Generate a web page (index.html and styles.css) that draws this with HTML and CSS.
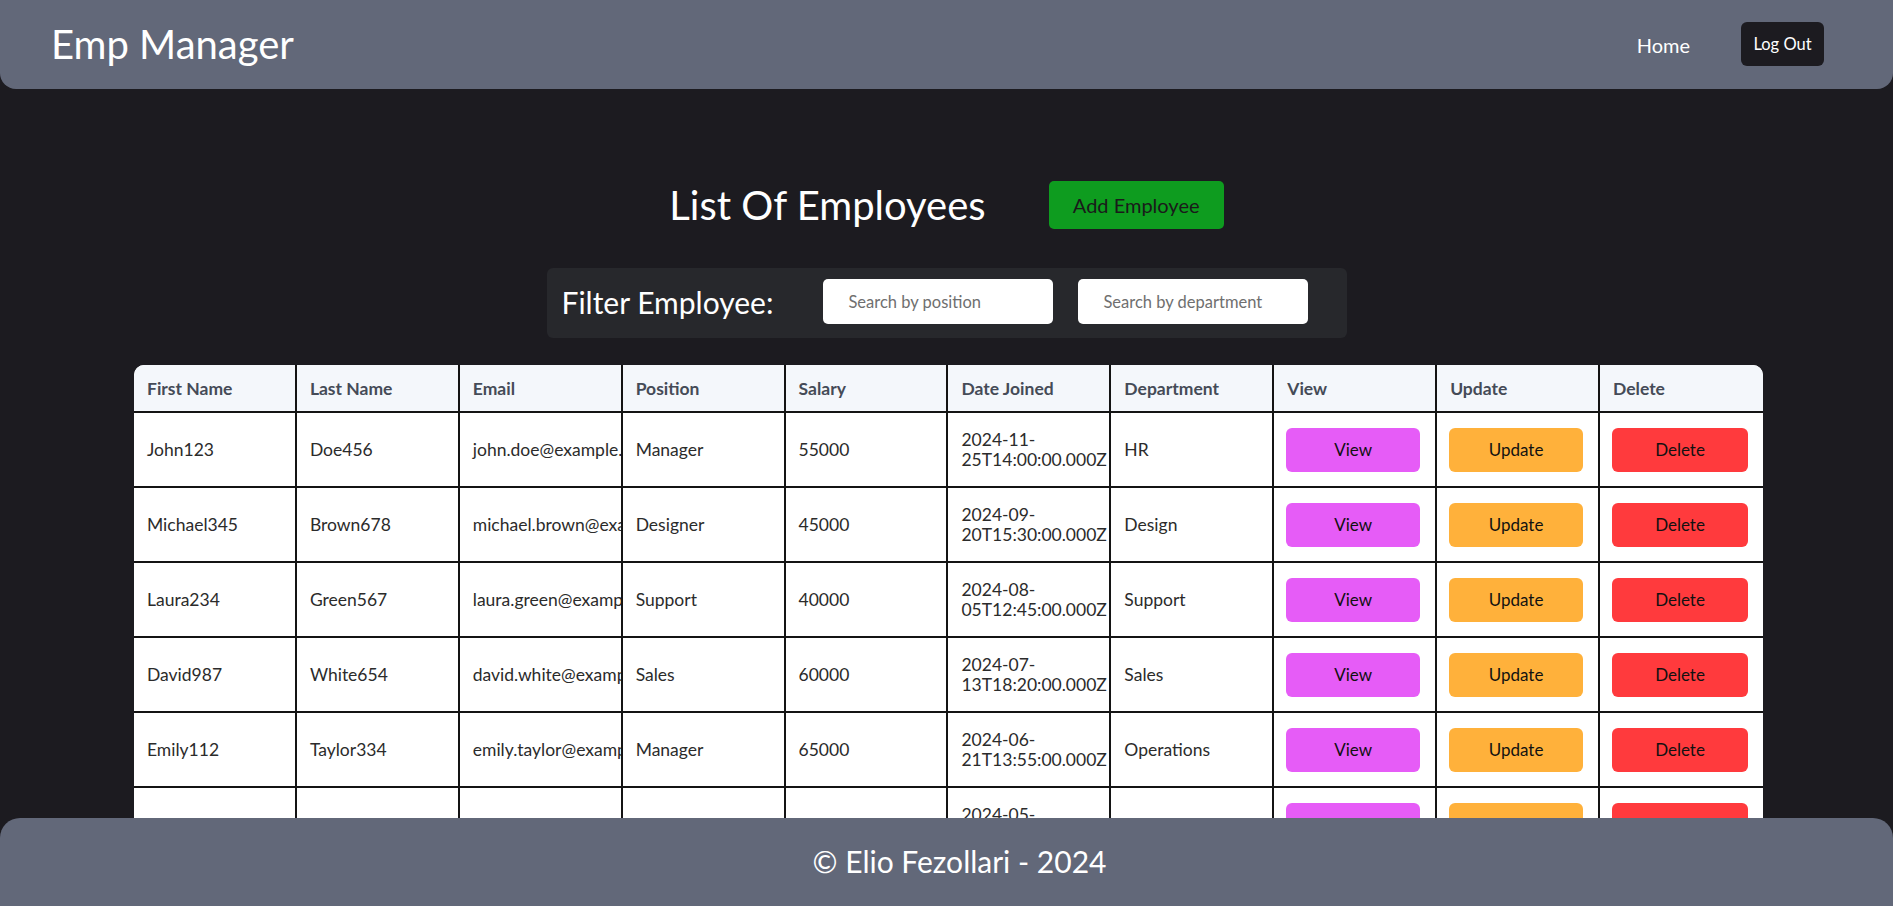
FILE: index.html
```html
<!DOCTYPE html>
<html lang="en">
<head>
<meta charset="utf-8">
<title>Emp Manager</title>
<link rel="stylesheet" href="styles.css">
</head>
<body>
<header class="topbar">
  <div class="brand">Emp Manager</div>
  <nav class="nav">
    <a class="nav-link" href="#">Home</a>
    <button class="logout">Log Out</button>
  </nav>
</header>

<main class="main">
  <div class="title-row">
    <h1 class="title">List Of Employees</h1>
    <button class="add-btn">Add Employee</button>
  </div>

  <div class="filter">
    <span class="filter-label">Filter Employee:</span>
    <input class="filter-input" type="text" placeholder="Search by position">
    <input class="filter-input" type="text" placeholder="Search by department">
  </div>

  <table class="emp-table">
    <thead>
      <tr>
        <th>First Name</th><th>Last Name</th><th>Email</th><th>Position</th><th>Salary</th><th>Date Joined</th><th>Department</th><th>View</th><th>Update</th><th>Delete</th>
      </tr>
    </thead>
    <tbody>
      <tr>
        <td>John123</td><td>Doe456</td><td>john.doe@example.com</td><td>Manager</td><td>55000</td><td>2024-11-25T14:00:00.000Z</td><td>HR</td>
        <td><button class="btn btn-view">View</button></td><td><button class="btn btn-update">Update</button></td><td><button class="btn btn-delete">Delete</button></td>
      </tr>
      <tr>
        <td>Michael345</td><td>Brown678</td><td>michael.brown@example.com</td><td>Designer</td><td>45000</td><td>2024-09-20T15:30:00.000Z</td><td>Design</td>
        <td><button class="btn btn-view">View</button></td><td><button class="btn btn-update">Update</button></td><td><button class="btn btn-delete">Delete</button></td>
      </tr>
      <tr>
        <td>Laura234</td><td>Green567</td><td>laura.green@example.com</td><td>Support</td><td>40000</td><td>2024-08-05T12:45:00.000Z</td><td>Support</td>
        <td><button class="btn btn-view">View</button></td><td><button class="btn btn-update">Update</button></td><td><button class="btn btn-delete">Delete</button></td>
      </tr>
      <tr>
        <td>David987</td><td>White654</td><td>david.white@example.com</td><td>Sales</td><td>60000</td><td>2024-07-13T18:20:00.000Z</td><td>Sales</td>
        <td><button class="btn btn-view">View</button></td><td><button class="btn btn-update">Update</button></td><td><button class="btn btn-delete">Delete</button></td>
      </tr>
      <tr>
        <td>Emily112</td><td>Taylor334</td><td>emily.taylor@example.com</td><td>Manager</td><td>65000</td><td>2024-06-21T13:55:00.000Z</td><td>Operations</td>
        <td><button class="btn btn-view">View</button></td><td><button class="btn btn-update">Update</button></td><td><button class="btn btn-delete">Delete</button></td>
      </tr>
      <tr>
        <td>Sarah556</td><td>Clark778</td><td>sarah.clark@example.com</td><td>Developer</td><td>70000</td><td>2024-05-10T09:15:00.000Z</td><td>IT</td>
        <td><button class="btn btn-view">View</button></td><td><button class="btn btn-update">Update</button></td><td><button class="btn btn-delete">Delete</button></td>
      </tr>
    </tbody>
  </table>
</main>

<footer class="footer">© Elio Fezollari - 2024</footer>
</body>
</html>
```

FILE: styles.css
```css
* { box-sizing: border-box; }

html, body {
  margin: 0;
  padding: 0;
}

body {
  background: #1c1b20;
  font-family: Lato, "Open Sans", "Liberation Sans", sans-serif;
  color: #ffffff;
  min-height: 906px;
}

.topbar {
  height: 89px;
  background: #626879;
  border-radius: 0 0 16px 16px;
  display: flex;
  align-items: center;
  justify-content: space-between;
  padding: 0 69px 0 51px;
}

.brand {
  font-size: 40px;
  color: #ffffff;
  line-height: 1;
  margin-top: -2px;
}

.nav {
  display: flex;
  align-items: center;
  gap: 51px;
}

.nav-link {
  color: #ffffff;
  text-decoration: none;
  font-size: 20px;
}

.logout {
  width: 83px;
  height: 44px;
  background: #1c1b20;
  color: #ffffff;
  border: none;
  border-radius: 6px;
  font-family: inherit;
  font-size: 16.5px;
  padding: 0;
  margin-top: -2px;
}

.main {
  padding: 92px 0 140px;
  display: flex;
  flex-direction: column;
  align-items: center;
}

.title-row {
  display: flex;
  align-items: center;
  gap: 63px;
  height: 48px;
}

.title {
  margin: 0;
  font-size: 40px;
  font-weight: 400;
  line-height: 48px;
}

.add-btn {
  width: 175px;
  height: 48px;
  background: #0e9c1f;
  color: #1a1a1a;
  border: none;
  border-radius: 5px;
  font-family: inherit;
  font-size: 20px;
  padding: 0;
}

.filter {
  margin-top: 39px;
  width: 800px;
  height: 70px;
  background: #27282c;
  border-radius: 6px;
  display: flex;
  align-items: center;
  padding: 0 38px 0 15px;
}

.filter-label {
  font-size: 30px;
  color: #ffffff;
  margin-right: 50px;
  margin-top: -2px;
}

.filter-input {
  width: 230px;
  height: 45px;
  border: none;
  border-radius: 5px;
  background: #ffffff;
  padding: 0 25px;
  font-family: inherit;
  font-size: 16.5px;
  color: #333;
  margin-top: -3px;
}

.filter-input + .filter-input {
  margin-left: 25px;
}

.filter-input::placeholder {
  color: #6f6f6f;
}

.emp-table {
  margin-top: 27px;
  width: 1629px;
  table-layout: fixed;
  border-collapse: separate;
  border-spacing: 0;
  background: #ffffff;
  border-radius: 10px 10px 0 0;
  overflow: hidden;
  position: relative;
  left: 2px;
}

.emp-table th,
.emp-table td {
  border-right: 2px solid #141414;
  border-bottom: 2px solid #141414;
  text-align: left;
  overflow: hidden;
  white-space: nowrap;
  font-size: 17.5px;
  padding: 0 0 0 13px;
}

.emp-table th:last-child,
.emp-table td:last-child {
  border-right: none;
}

.emp-table th {
  background: #f4f7fb;
  color: #454b57;
  font-weight: 700;
  height: 48px;
}

.emp-table td {
  background: #ffffff;
  color: #2b2b2b;
  height: 75px;
}

.emp-table td:nth-child(6) {
  white-space: normal;
  line-height: 20px;
  padding-left: 13px;
  padding-right: 0;
}

.emp-table td:nth-child(n+8) {
  padding: 0 15px 0 12px;
}

.btn {
  width: 100%;
  height: 44px;
  border: none;
  border-radius: 6px;
  font-family: inherit;
  font-size: 17px;
  color: #111111;
  padding: 0;
  display: block;
}

.btn-view { background: #e65cf7; }
.btn-update { background: #ffb13b; }
.btn-delete { background: #ff3a3d; }

.footer {
  position: fixed;
  left: 0;
  right: 0;
  bottom: 0;
  height: 88px;
  background: #626879;
  border-radius: 20px 20px 0 0;
  display: flex;
  align-items: center;
  justify-content: center;
  padding-left: 26px;
  padding-bottom: 2px;
  font-size: 30px;
  color: #ffffff;
}
```
